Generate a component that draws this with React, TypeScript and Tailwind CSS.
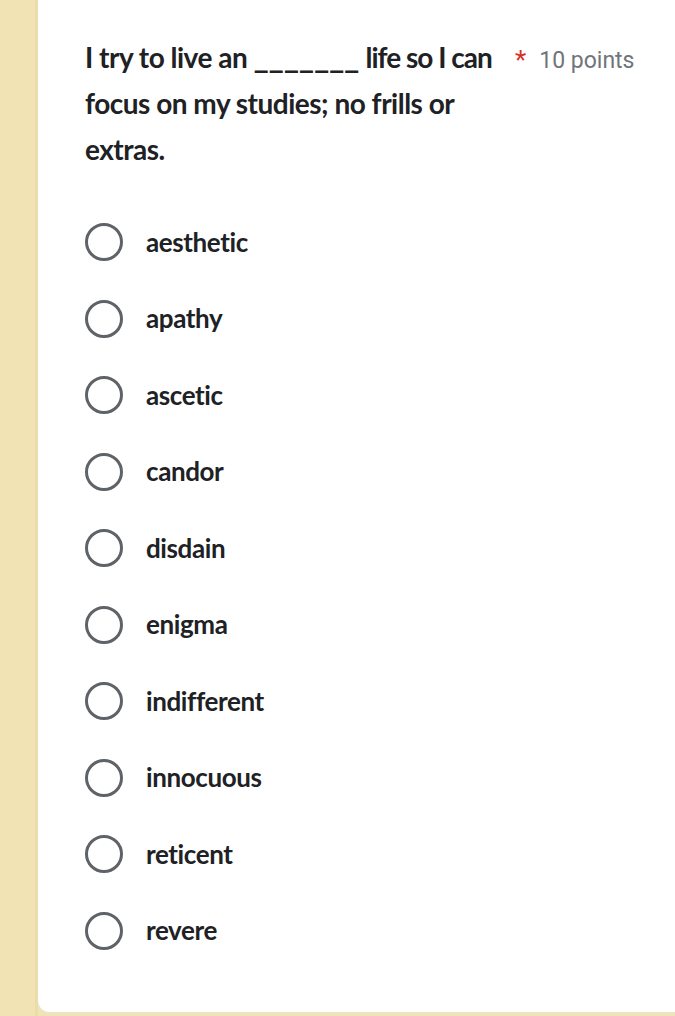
import React from "react";

const options = [
  "aesthetic",
  "apathy",
  "ascetic",
  "candor",
  "disdain",
  "enigma",
  "indifferent",
  "innocuous",
  "reticent",
  "revere",
];

export default function App() {
  return (
    <div className="flex min-h-[1016px] w-[675px] bg-[#f1e3b3]">
      <div className="w-[38px] shrink-0 border-r-[3px] border-[#ebdcae] bg-[#f1e3b3]" />
      <div className="flex flex-1 flex-col">
        <div className="flex-1 rounded-bl-[12px] border-b border-[#e6e2d8] bg-white pb-[42px] pl-[47px] pr-[30px] pt-[34px]">
          <div className="flex items-start">
            <div
              className="w-[430px] shrink-0 text-[28px] font-bold leading-[46px] tracking-[-0.5px] text-[#202124]"
              style={{ fontFamily: "Lato, 'Open Sans', sans-serif" }}
            >
              I try to live an <span className="text-[33px] leading-none tracking-[-0.3px]">_______</span>{" "}
              <span className="tracking-[-1px]">life so I can</span>
              <br />
              focus on my studies; no frills or
              <br />
              extras.
            </div>
            <div
              className="flex items-start pt-[12px] text-[23px] leading-[30px] text-[#70757a]"
              style={{ fontFamily: "Roboto, sans-serif" }}
            >
              <span className="mr-[13px] text-[26px] leading-[28px] text-[#d93025]">*</span>
              <span>10 points</span>
            </div>
          </div>
          <div className="mt-[32px] flex flex-col">
            {options.map((o) => (
              <div key={o} className="flex h-[76.5px] items-center">
                <div className="h-[38px] w-[38px] shrink-0 rounded-full border-[3px] border-[#5f6368]" />
                <span
                  className="ml-[23px] text-[26px] font-bold tracking-[-0.4px] text-[#202124]"
                  style={{ fontFamily: "Lato, 'Open Sans', sans-serif" }}
                >
                  {o}
                </span>
              </div>
            ))}
          </div>
        </div>
        <div className="h-[3px] bg-[#f1e3b3]" />
      </div>
    </div>
  );
}
